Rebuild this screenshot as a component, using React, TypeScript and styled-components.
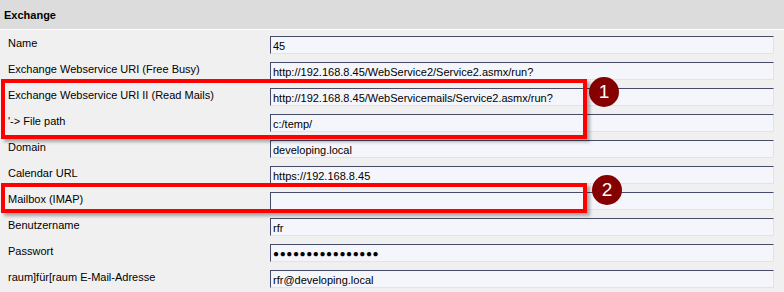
import styled, { createGlobalStyle } from 'styled-components';

const GlobalStyle = createGlobalStyle`
  html, body {
    margin: 0;
    padding: 0;
    background: #f0f0f0;
  }
  body {
    font-family: 'Liberation Sans', Arial, sans-serif;
    font-size: 11px;
    color: #000;
  }
`;

const Page = styled.div`
  position: relative;
  width: 784px;
  height: 292px;
  overflow: hidden;
  background: #f0f0f0;
`;

const Header = styled.div`
  height: 29px;
  display: flex;
  align-items: center;
  padding-left: 4px;
  background: #dcdcdc;
  border-bottom: 1px solid #ffffff;
  font-weight: bold;
  font-size: 11px;
`;

const Form = styled.div`
  display: flex;
  flex-direction: column;
`;

const Row = styled.div`
  display: flex;
  align-items: flex-start;
  height: 26px;
  padding-top: 6px;
  box-sizing: border-box;
`;

const Label = styled.div`
  width: 262px;
  padding: 1px 0 0 8px;
  line-height: 13px;
  white-space: nowrap;
`;

const Field = styled.div<{ $dots?: boolean }>`
  width: 504px;
  height: 18px;
  box-sizing: border-box;
  padding: 1px 2px 0;
  display: flex;
  align-items: center;
  background: #f5f6fb;
  border-top: 1px solid #444a68;
  border-left: 1px solid #444a68;
  border-right: 1px solid #e2e3e8;
  border-bottom: 1px solid #e2e3e8;
  white-space: nowrap;
  font-size: ${(p) => (p.$dots ? '10px' : '11px')};
  letter-spacing: ${(p) => (p.$dots ? '0.6px' : '0')};
`;

const Highlight = styled.div<{ $top: number; $height: number }>`
  position: absolute;
  left: 1px;
  top: ${(p) => p.$top}px;
  width: 586px;
  height: ${(p) => p.$height}px;
  box-sizing: border-box;
  border: 4px solid #ff0000;
  box-shadow: 3px 3px 3px rgba(0, 0, 0, 0.3);
`;

const Badge = styled.div<{ $x: number; $y: number }>`
  position: absolute;
  left: ${(p) => p.$x - 15}px;
  top: ${(p) => p.$y - 15}px;
  width: 30px;
  height: 30px;
  border-radius: 50%;
  background: #850000;
  color: #fff;
  display: flex;
  align-items: center;
  justify-content: center;
  font-family: 'Liberation Sans', Arial, sans-serif;
  font-size: 19px;
`;

const rows: { label: string; value: string; dots?: boolean }[] = [
  { label: 'Name', value: '45' },
  { label: 'Exchange Webservice URI (Free Busy)', value: 'http://192.168.8.45/WebService2/Service2.asmx/run?' },
  { label: 'Exchange Webservice URI II (Read Mails)', value: 'http://192.168.8.45/WebServicemails/Service2.asmx/run?' },
  { label: "'-> File path", value: 'c:/temp/' },
  { label: 'Domain', value: 'developing.local' },
  { label: 'Calendar URL', value: 'https://192.168.8.45' },
  { label: 'Mailbox (IMAP)', value: '' },
  { label: 'Benutzername', value: 'rfr' },
  { label: 'Passwort', value: '\u25CF'.repeat(16), dots: true },
  { label: 'raum]für[raum E-Mail-Adresse', value: 'rfr@developing.local' },
];

export default function App() {
  return (
    <Page>
      <GlobalStyle />
      <Header>Exchange</Header>
      <Form>
        {rows.map((r) => (
          <Row key={r.label}>
            <Label>{r.label}</Label>
            <Field $dots={r.dots}>{r.value}</Field>
          </Row>
        ))}
      </Form>
      <Highlight $top={79} $height={60} />
      <Highlight $top={183} $height={30} />
      <Badge $x={604} $y={92}>1</Badge>
      <Badge $x={607} $y={190}>2</Badge>
    </Page>
  );
}
